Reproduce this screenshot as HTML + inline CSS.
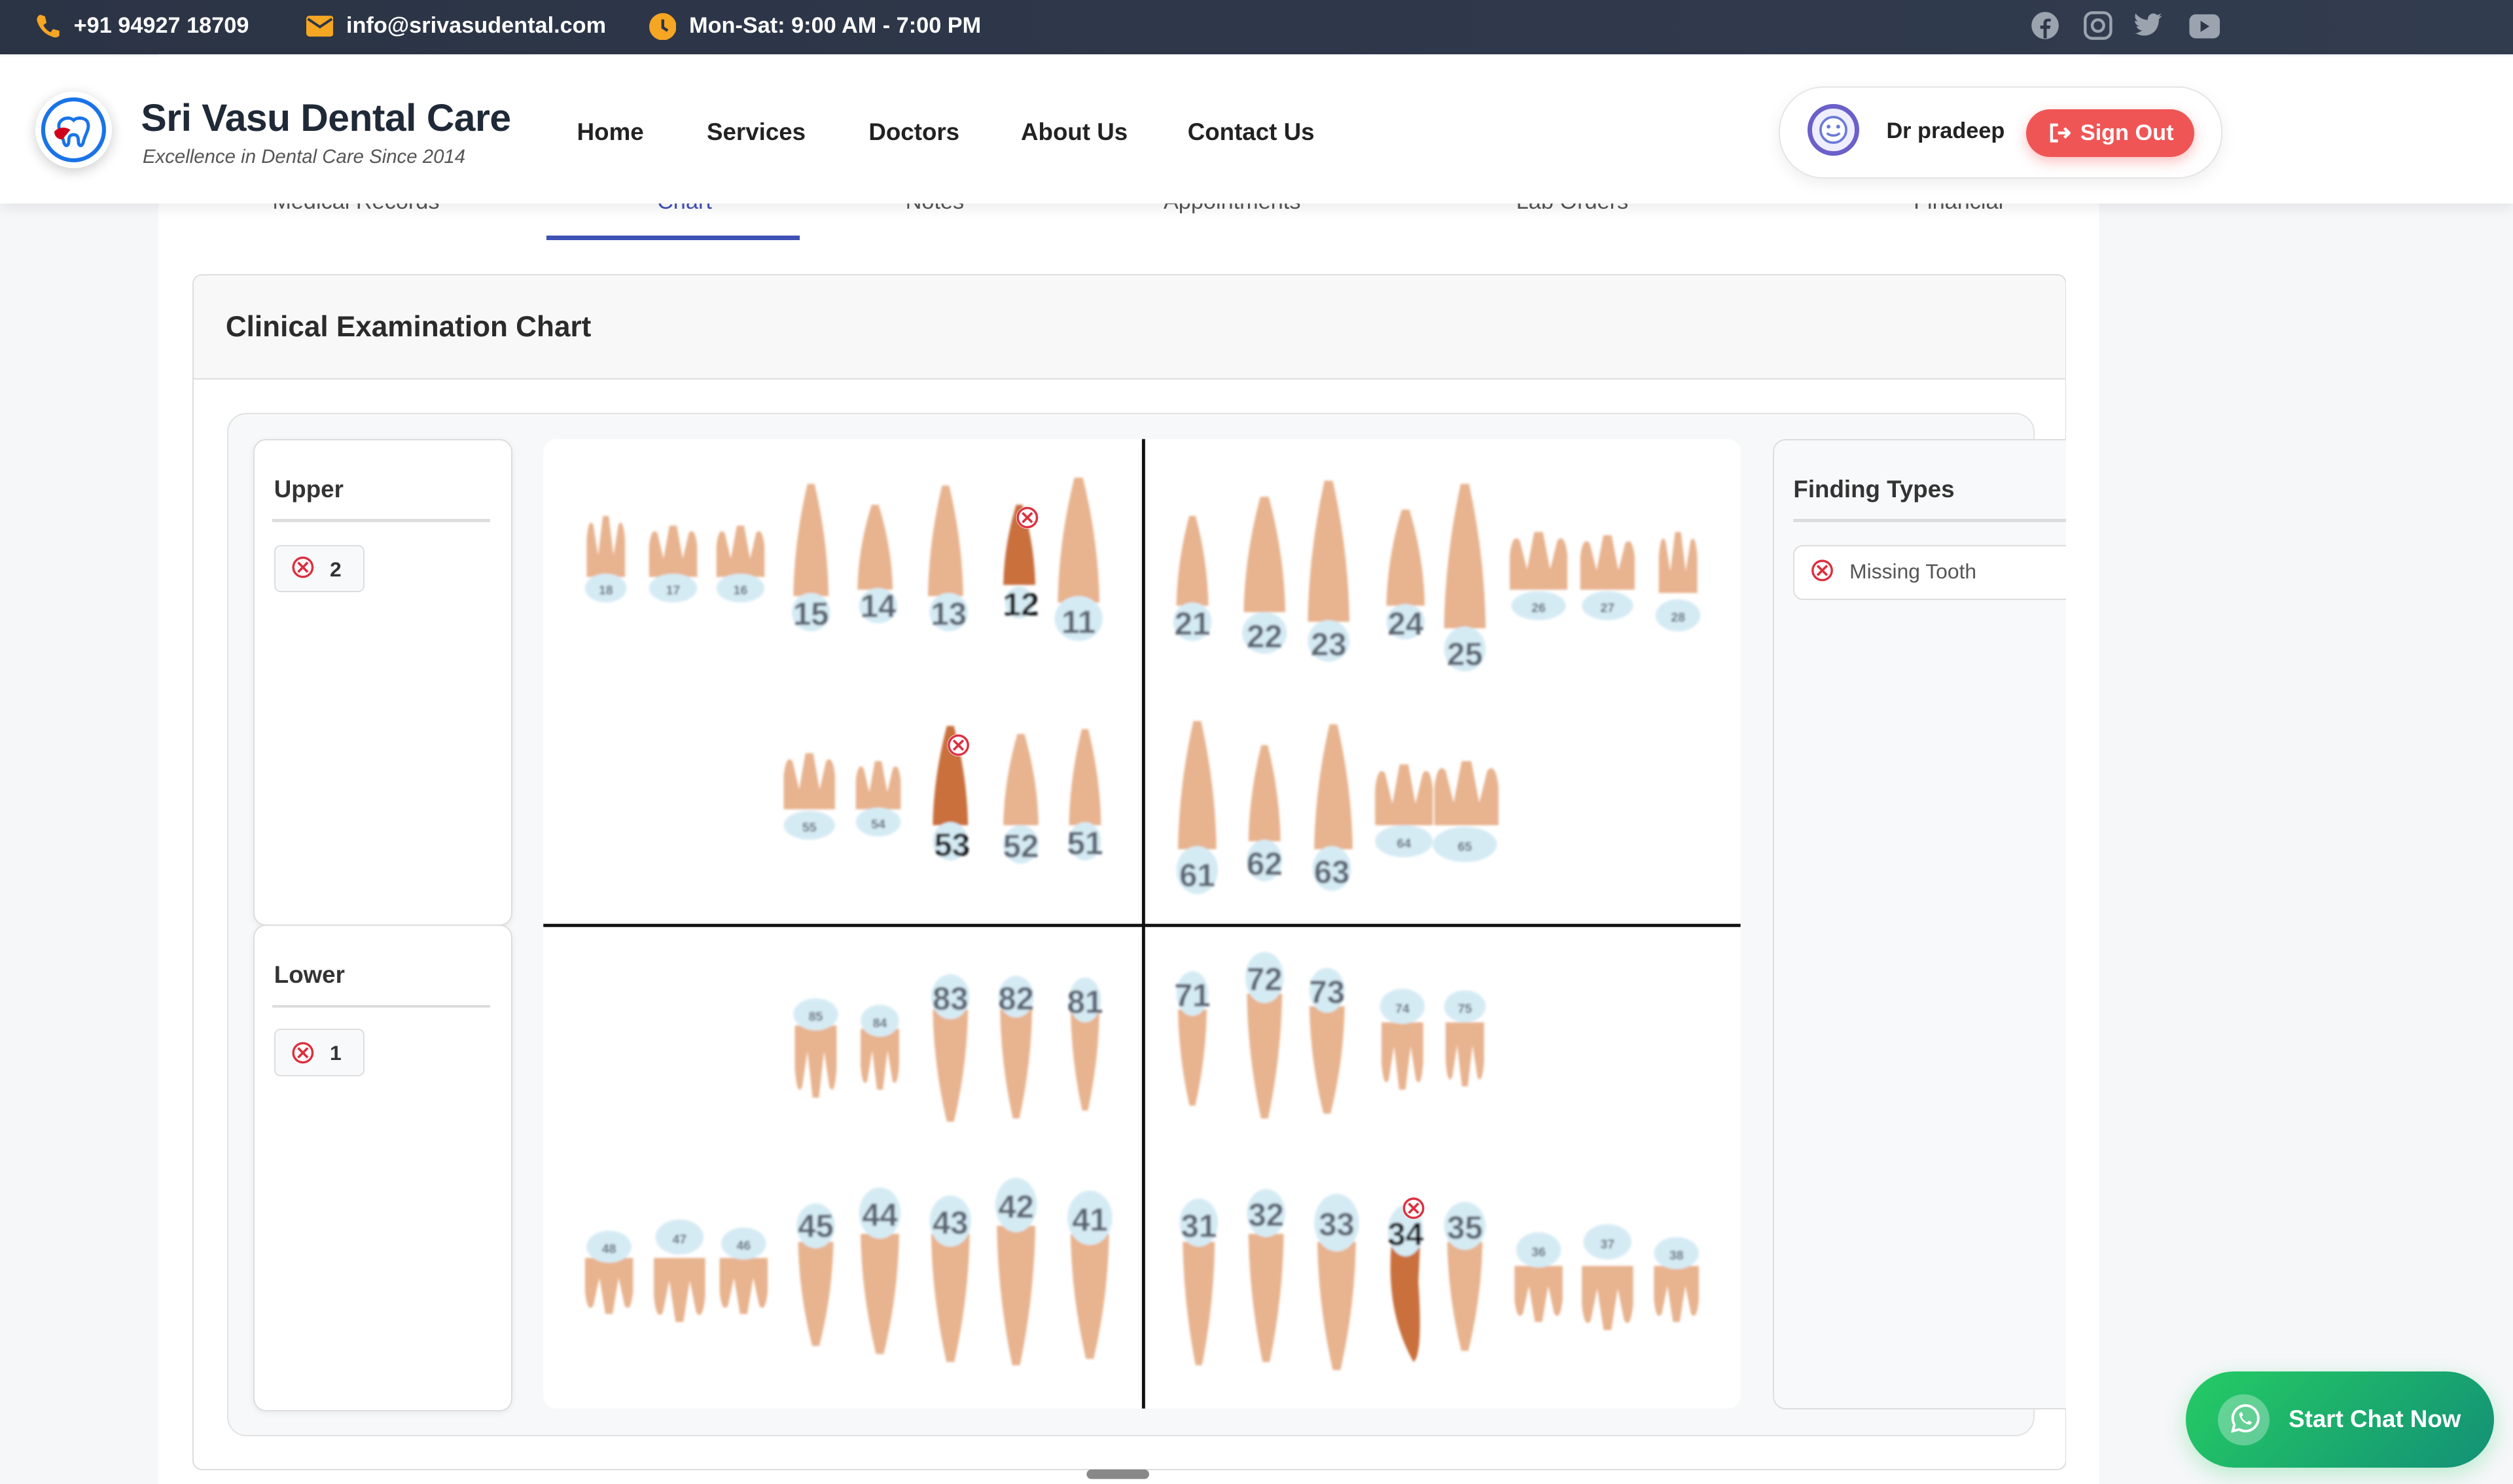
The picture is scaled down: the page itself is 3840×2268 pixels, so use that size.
<!DOCTYPE html>
<html><head><meta charset="utf-8"><style>
html,body{margin:0;padding:0;width:3840px;height:2268px;overflow:hidden;background:#f6f7f9}
#z{zoom:2.44898;width:1568px;height:926px;position:relative;font-family:"Liberation Sans",Arial,sans-serif;overflow:hidden}
.a{position:absolute}
.top{left:0;top:0;width:1568px;height:34px;background:linear-gradient(90deg,#2b3445,#323c4f);color:#fff;font-size:14px;font-weight:bold}
.top span{position:absolute;top:8px}
.hdr{left:0;top:35px;width:1568px;height:92px;background:#fff;box-shadow:0 3px 8px rgba(0,0,0,.08)}
.nav{top:74px;font-size:15px;font-weight:bold;color:#222}
.card{left:120px;top:171px;width:1168px;height:745px;border:1px solid #ddd;border-radius:6px;background:#fff}
.pan{background:#fff;border:1px solid #ddd;border-radius:8px;box-shadow:0 1px 4px rgba(0,0,0,.06)}
.pt{font-size:15px;font-weight:bold;color:#333}
.chip{border:1px solid #ddd;border-radius:4px;background:#f8f9fa;font-size:13px;font-weight:bold;color:#333}
</style></head><body><div id="z">
<div class="a" style="left:99px;top:0;width:1211px;height:926px;background:#fff"></div>
<!-- tabs behind header -->
<div class="a" style="left:140px;top:118px;font-size:14px;color:#555;width:1140px;height:16px;overflow:hidden;white-space:nowrap">
<span class="a" style="left:30px">Medical Records</span><span class="a" style="left:270px;color:#3f51b5">Chart</span><span class="a" style="left:425px">Notes</span><span class="a" style="left:586px">Appointments</span><span class="a" style="left:806px">Lab Orders</span><span class="a" style="left:1054px">Financial</span></div>
<div class="a" style="left:341px;top:147px;width:158px;height:3px;background:#3f51b5"></div>
<div class="a top">
<svg class="a" style="left:22px;top:8px" width="16" height="16" viewBox="0 0 16 16"><path d="M3 1l3 1 1 4-2 1.5c1 2 2.5 3.5 4.5 4.5L11 10l4 1 0 3c-1 1.5-3 1.5-5 .5C6 13 3 10 1.5 6 .5 4 1 2 3 1z" fill="#f5a623"/></svg>
<span style="left:46px">+91 94927 18709</span>
<svg class="a" style="left:191px;top:10px" width="17" height="13"><rect width="17" height="13" rx="2" fill="#f5a623"/><path d="M1 2l7.5 5L16 2" stroke="#2d3646" stroke-width="1.6" fill="none"/></svg>
<span style="left:216px">info@srivasudental.com</span>
<svg class="a" style="left:405px;top:8px" width="17" height="17"><circle cx="8.5" cy="8.5" r="8.5" fill="#f5a623"/><path d="M8.5 4v5l3 2" stroke="#2d3646" stroke-width="1.8" fill="none"/></svg>
<span style="left:430px">Mon-Sat: 9:00 AM - 7:00 PM</span>
<svg class="a" style="left:1267px;top:7px" width="120" height="20"><circle cx="9" cy="9" r="8.5" fill="#9aa3ae"/><path d="M10 17v-6h2l.4-2H10V7.5c0-.7.3-1 1-1h1.5V4.7H10.8C9 4.7 8 5.8 8 7.4V9H6v2h2v6z" fill="#2f3849"/><rect x="34" y="1" width="16" height="16" rx="4.5" fill="none" stroke="#9aa3ae" stroke-width="1.8"/><circle cx="42" cy="9" r="3.6" fill="none" stroke="#9aa3ae" stroke-width="1.8"/><path d="M66 14c5 3 14 1 14-9l2-2-2 .5 1.5-2-2.5 1c-2-2-6-1-6 3-3 0-6-2-7.5-4-1 2 0 4 1.5 5l-2-.5c0 2 1.5 3 3 3.5h-2c.5 1.5 2 2.5 3.5 2.5-1.5 1.2-3.5 2-5.5 2z" fill="#9aa3ae"/><rect x="99" y="2" width="19" height="15" rx="4" fill="#9aa3ae"/><path d="M106 6v7l5.5-3.5z" fill="#2f3849"/></svg>
</div>
<div class="a hdr">
<div class="a" style="left:22px;top:22px;width:48px;height:48px;border-radius:50%;background:#fff;box-shadow:0 2px 8px rgba(0,0,0,.2)"></div>
<svg class="a" style="left:25px;top:25px" width="42" height="42" viewBox="0 0 42 42"><circle cx="21" cy="21" r="19" fill="#fff" stroke="#1a73e8" stroke-width="2.5"/><path d="M12 17c2-4 7-4 9-2 2-2 8-2 9 2 1 4-2 7-3 12-1 3-3 2-3-1 0-3-1-4-3-4s-3 1-3 4-2 4-3 1c-1-5-4-8-3-12z" fill="none" stroke="#1a73e8" stroke-width="2"/><path d="M9 22c3-3 7-3 10-1l-5 6c-3 0-5-2-5-5z" fill="#d0021b"/></svg>
<div class="a" style="left:88px;top:25px;font-size:24px;font-weight:bold;color:#1f2937;letter-spacing:-.2px">Sri Vasu Dental Care</div>
<div class="a" style="left:89px;top:56px;font-size:12px;font-style:italic;color:#555">Excellence in Dental Care Since 2014</div>
<div class="a nav" style="left:360px;top:39px">Home</div>
<div class="a nav" style="left:441px;top:39px">Services</div>
<div class="a nav" style="left:542px;top:39px">Doctors</div>
<div class="a nav" style="left:637px;top:39px">About Us</div>
<div class="a nav" style="left:741px;top:39px">Contact Us</div>
<div class="a" style="left:1110px;top:19px;width:275px;height:56px;border:1px solid #e5e5e5;border-radius:28px;background:#fff;box-shadow:0 3px 10px rgba(0,0,0,.07)"></div>
<div class="a" style="left:1128px;top:30px;width:32px;height:32px;border-radius:50%;border:3px solid #6b5fc9;box-sizing:border-box;background:#eef"></div>
<svg class="a" style="left:1134px;top:36px" width="20" height="20"><circle cx="10" cy="10" r="8" fill="#fff" stroke="#6b7ad6" stroke-width="1.5"/><circle cx="7" cy="8" r="1.2" fill="#6b7ad6"/><circle cx="13" cy="8" r="1.2" fill="#6b7ad6"/><path d="M6 12c2 2 6 2 8 0" stroke="#6b7ad6" stroke-width="1.5" fill="none"/></svg>
<div class="a" style="left:1177px;top:39px;font-size:14px;font-weight:bold;color:#222">Dr pradeep</div>
<div class="a" style="left:1264px;top:33px;width:105px;height:30px;border-radius:15px;background:#f05555;box-shadow:0 3px 8px rgba(240,80,80,.35);color:#fff;font-size:14px;font-weight:bold;line-height:30px"><span style="margin-left:34px">Sign Out</span></div>
<svg class="a" style="left:1278px;top:41px" width="14" height="14"><path d="M6 2H2v10h4M6 7h7M10 4l3 3-3 3" stroke="#fff" stroke-width="1.8" fill="none"/></svg>
</div>

<div class="a card">
<div class="a" style="left:0;top:0;width:1168px;height:64px;background:#f8f8f8;border-bottom:1px solid #ddd;border-radius:6px 6px 0 0"></div>
<div class="a" style="left:20px;top:22px;font-size:18px;font-weight:bold;color:#2b2b2b">Clinical Examination Chart</div>
<div class="a" style="left:21px;top:86px;width:1126px;height:637px;background:#f7f8f9;border:1px solid #e2e2e2;border-radius:12px"></div>
</div>
<div class="a pan" style="left:158px;top:274px;width:160px;height:302px"></div>
<div class="a pan" style="left:158px;top:577px;width:160px;height:302px"></div>
<div class="a pt" style="left:171px;top:297px">Upper</div>
<div class="a" style="left:170px;top:324px;width:136px;height:2px;background:#ddd"></div>
<div class="a chip" style="left:171px;top:340px;width:55px;height:28px"><span class="a" style="left:34px;top:7px">2</span></div>
<div class="a pt" style="left:171px;top:600px">Lower</div>
<div class="a" style="left:170px;top:627px;width:136px;height:2px;background:#ddd"></div>
<div class="a chip" style="left:171px;top:642px;width:55px;height:28px"><span class="a" style="left:34px;top:7px">1</span></div>
<div class="a" style="left:1106px;top:274px;width:200px;height:604px;background:#f8f9fa;border:1px solid #ddd;border-radius:8px"></div>
<div class="a" style="left:1289px;top:170px;width:279px;height:760px;background:#f6f7f9"></div>
<div class="a" style="left:1289px;top:170px;width:21px;height:760px;background:#fff"></div>
<div class="a pt" style="left:1119px;top:297px">Finding Types</div>
<div class="a" style="left:1119px;top:324px;width:170px;height:2px;background:#ddd"></div>
<div class="a" style="left:1119px;top:340px;width:175px;height:33px;border:1px solid #ddd;border-radius:6px;background:#fff"></div>
<div class="a" style="left:1289px;top:330px;width:21px;height:50px;background:#fff"></div>
<div class="a" style="left:1154px;top:349px;font-size:13px;color:#555">Missing Tooth</div>
<svg class="a" style="left:0;top:0" width="1568" height="926">
<defs>
<g id="x"><circle r="7" fill="#fff"/><circle r="6" fill="none" stroke="#dc2f3f" stroke-width="1.4"/><path d="M-3-3L3 3M3-3L-3 3" stroke="#dc2f3f" stroke-width="1.5"/></g>
<path id="r" d="M-1,0 Q-0.95,-0.5 -0.2,-1 L0.2,-1 Q0.95,-0.5 1,0Z"/>
<path id="m" d="M-1,0 L-1,-0.6 Q-0.9,-1 -0.65,-0.85 L-0.4,-0.35 L-0.15,-1 L0.15,-1 L0.4,-0.35 L0.65,-0.85 Q0.9,-1 1,-0.6 L1,0Z"/>
<filter id="b"><feGaussianBlur stdDeviation="0.8"/></filter>
</defs>
<use href="#x" x="189" y="354"/><use href="#x" x="189" y="657"/><use href="#x" x="1137" y="356"/>
<rect x="339" y="274" width="747" height="605" rx="8" fill="#fff"/>
<g filter="url(#b)" font-family="Liberation Sans Narrow,Liberation Sans,sans-serif" font-weight="bold" text-anchor="middle" fill="#5a6470">
<g fill="#e8b38f">
<!-- upper permanent -->
<use href="#m" transform="translate(378,360) scale(12,38)"/>
<use href="#m" transform="translate(420,360) scale(15,32)"/>
<use href="#m" transform="translate(462,360) scale(15,32)"/>
<use href="#r" transform="translate(506,372) scale(11,70)"/>
<use href="#r" transform="translate(546,368) scale(11,53)"/>
<use href="#r" transform="translate(590,372) scale(11,69)"/>
<use href="#r" transform="translate(673,376) scale(13,78)"/>
<use href="#r" transform="translate(744,378) scale(10,56)"/>
<use href="#r" transform="translate(789,382) scale(13,72)"/>
<use href="#r" transform="translate(829,388) scale(13,88)"/>
<use href="#r" transform="translate(877,378) scale(12,60)"/>
<use href="#r" transform="translate(914,392) scale(13,90)"/>
<use href="#m" transform="translate(960,368) scale(18,36)"/>
<use href="#m" transform="translate(1003,368) scale(17,34)"/>
<use href="#m" transform="translate(1047,370) scale(12,38)"/>
<!-- upper primary -->
<use href="#m" transform="translate(505,505) scale(16,35)"/>
<use href="#m" transform="translate(548,505) scale(14,30)"/>
<use href="#r" transform="translate(637,515) scale(11,57)"/>
<use href="#r" transform="translate(677,515) scale(10,60)"/>
<use href="#r" transform="translate(747,530) scale(12,80)"/>
<use href="#r" transform="translate(789,525) scale(10,60)"/>
<use href="#r" transform="translate(832,530) scale(12,78)"/>
<use href="#m" transform="translate(876,515) scale(18,38)"/>
<use href="#m" transform="translate(915,515) scale(20,40)"/>
<!-- lower primary -->
<use href="#m" transform="translate(509,640) scale(13,-45)"/>
<use href="#m" transform="translate(549,642) scale(12,-38)"/>
<use href="#r" transform="translate(593,630) scale(11,-70)"/>
<use href="#r" transform="translate(634,630) scale(10,-68)"/>
<use href="#r" transform="translate(677,630) scale(9,-63)"/>
<use href="#r" transform="translate(744,630) scale(9,-60)"/>
<use href="#r" transform="translate(789,620) scale(11,-78)"/>
<use href="#r" transform="translate(828,628) scale(11,-67)"/>
<use href="#m" transform="translate(875,638) scale(13,-42)"/>
<use href="#m" transform="translate(914,638) scale(12,-40)"/>
<!-- lower permanent -->
<use href="#m" transform="translate(380,785) scale(15,-35)"/>
<use href="#m" transform="translate(424,785) scale(16,-40)"/>
<use href="#m" transform="translate(464,785) scale(15,-35)"/>
<use href="#r" transform="translate(509,775) scale(11,-65)"/>
<use href="#r" transform="translate(549,770) scale(12,-75)"/>
<use href="#r" transform="translate(593,770) scale(12,-80)"/>
<use href="#r" transform="translate(634,765) scale(12,-87)"/>
<use href="#r" transform="translate(680,770) scale(12,-78)"/>
<use href="#r" transform="translate(748,775) scale(10,-77)"/>
<use href="#r" transform="translate(790,770) scale(11,-80)"/>
<use href="#r" transform="translate(834,775) scale(12,-80)"/>
<use href="#r" transform="translate(914,775) scale(11,-68)"/>
<use href="#m" transform="translate(960,790) scale(15,-35)"/>
<use href="#m" transform="translate(1003,790) scale(16,-40)"/>
<use href="#m" transform="translate(1046,790) scale(14,-35)"/>
</g>
<g fill="#c9703e">
<use href="#r" transform="translate(636,365) scale(10,50)"/>
<use href="#r" transform="translate(593,515) scale(11,62)"/>
<path d="M868,778 Q865,820 882,850 Q888,845 885,800 L886,778Z"/>
</g>
<g fill="#d5ebf4">
<ellipse cx="378" cy="367" rx="13" ry="9"/><ellipse cx="420" cy="367" rx="15" ry="9"/><ellipse cx="462" cy="367" rx="15" ry="9"/>
<ellipse cx="506" cy="382" rx="12" ry="12"/><ellipse cx="548" cy="378" rx="12" ry="11"/><ellipse cx="592" cy="382" rx="12" ry="12"/><ellipse cx="636" cy="376" rx="9" ry="10"/><ellipse cx="673" cy="386" rx="15" ry="14"/>
<ellipse cx="744" cy="388" rx="12" ry="12"/><ellipse cx="789" cy="395" rx="14" ry="13"/><ellipse cx="829" cy="400" rx="13" ry="13"/><ellipse cx="877" cy="388" rx="12" ry="11"/><ellipse cx="914" cy="405" rx="13" ry="14"/><ellipse cx="960" cy="378" rx="17" ry="9"/><ellipse cx="1003" cy="378" rx="16" ry="9"/><ellipse cx="1047" cy="384" rx="14" ry="10"/>
<ellipse cx="505" cy="515" rx="16" ry="9"/><ellipse cx="548" cy="513" rx="14" ry="9"/><ellipse cx="593" cy="525" rx="11" ry="12"/><ellipse cx="637" cy="527" rx="11" ry="12"/><ellipse cx="677" cy="525" rx="10" ry="12"/>
<ellipse cx="747" cy="543" rx="13" ry="15"/><ellipse cx="789" cy="537" rx="11" ry="13"/><ellipse cx="831" cy="542" rx="12" ry="14"/><ellipse cx="876" cy="525" rx="18" ry="10"/><ellipse cx="914" cy="527" rx="20" ry="11"/>
<ellipse cx="509" cy="633" rx="14" ry="10"/><ellipse cx="549" cy="637" rx="12" ry="10"/><ellipse cx="593" cy="622" rx="12" ry="14"/><ellipse cx="634" cy="622" rx="11" ry="13"/><ellipse cx="677" cy="624" rx="10" ry="14"/>
<ellipse cx="744" cy="620" rx="10" ry="14"/><ellipse cx="789" cy="610" rx="12" ry="16"/><ellipse cx="828" cy="618" rx="11" ry="14"/><ellipse cx="875" cy="628" rx="14" ry="11"/><ellipse cx="914" cy="628" rx="13" ry="10"/>
<ellipse cx="380" cy="778" rx="14" ry="10"/><ellipse cx="424" cy="772" rx="15" ry="11"/><ellipse cx="464" cy="776" rx="14" ry="10"/><ellipse cx="509" cy="765" rx="12" ry="14"/><ellipse cx="549" cy="757" rx="13" ry="16"/><ellipse cx="593" cy="762" rx="13" ry="16"/><ellipse cx="634" cy="752" rx="13" ry="17"/><ellipse cx="680" cy="760" rx="14" ry="17"/>
<ellipse cx="748" cy="763" rx="12" ry="15"/><ellipse cx="790" cy="757" rx="12" ry="15"/><ellipse cx="834" cy="763" rx="14" ry="18"/><ellipse cx="877" cy="768" rx="11" ry="16"/><ellipse cx="914" cy="765" rx="13" ry="15"/><ellipse cx="960" cy="780" rx="14" ry="11"/><ellipse cx="1003" cy="775" rx="15" ry="11"/><ellipse cx="1046" cy="782" rx="14" ry="10"/>
</g>
<g font-size="8"><text x="378" y="371">18</text><text x="420" y="371">17</text><text x="462" y="371">16</text><text x="960" y="382">26</text><text x="1003" y="382">27</text><text x="1047" y="388">28</text><text x="505" y="519">55</text><text x="548" y="517">54</text><text x="876" y="529">64</text><text x="914" y="531">65</text><text x="509" y="637">85</text><text x="549" y="641">84</text><text x="875" y="632">74</text><text x="914" y="632">75</text><text x="380" y="782">48</text><text x="424" y="776">47</text><text x="464" y="780">46</text><text x="960" y="784">36</text><text x="1003" y="779">37</text><text x="1046" y="786">38</text></g>
<g font-size="20"><text x="506" y="390">15</text><text x="548" y="385">14</text><text x="592" y="390">13</text><text x="673" y="395">11</text><text x="744" y="396">21</text><text x="789" y="404">22</text><text x="829" y="409">23</text><text x="877" y="396">24</text><text x="914" y="415">25</text><text x="637" y="535">52</text><text x="677" y="533">51</text><text x="747" y="553">61</text><text x="789" y="546">62</text><text x="831" y="551">63</text><text x="593" y="630">83</text><text x="634" y="630">82</text><text x="677" y="632">81</text><text x="744" y="628">71</text><text x="789" y="618">72</text><text x="828" y="626">73</text><text x="509" y="772">45</text><text x="549" y="765">44</text><text x="593" y="770">43</text><text x="634" y="760">42</text><text x="680" y="768">41</text><text x="748" y="772">31</text><text x="790" y="765">32</text><text x="834" y="771">33</text><text x="914" y="773">35</text></g>
<g font-size="20" fill="#111"><text x="637" y="384">12</text><text x="594" y="534">53</text><text x="877" y="777">34</text></g>
</g>
<use href="#x" x="641" y="323"/><use href="#x" x="598" y="465"/><use href="#x" x="882" y="754"/>
<path d="M713.5 274V879M339 577.5H1086" stroke="#111" stroke-width="2"/>
<rect x="678" y="917" width="39" height="6" rx="3" fill="#888"/>
</svg>
<div class="a" style="left:1364px;top:856px;width:192px;height:60px;border-radius:30px;background:linear-gradient(135deg,#25cc64,#139076);box-shadow:0 4px 14px rgba(37,204,100,.3)"></div>
<div class="a" style="left:1384px;top:870px;width:32px;height:32px;border-radius:50%;background:rgba(255,255,255,.3)"></div>
<svg class="a" style="left:1389px;top:875px" width="22" height="22" viewBox="0 0 22 22"><path d="M4 18l1-4a8 8 0 1 1 3 3z" fill="none" stroke="#fff" stroke-width="1.6"/><path d="M8 7c0 3 3 7 7 7l1-1.5-2-1-1 1c-1.5-.5-3-2-3.5-3.5l1-1-1-2z" fill="#fff"/></svg>
<div class="a" style="left:1428px;top:877px;font-size:15px;font-weight:bold;color:#fff">Start Chat Now</div>
</div></body></html>
